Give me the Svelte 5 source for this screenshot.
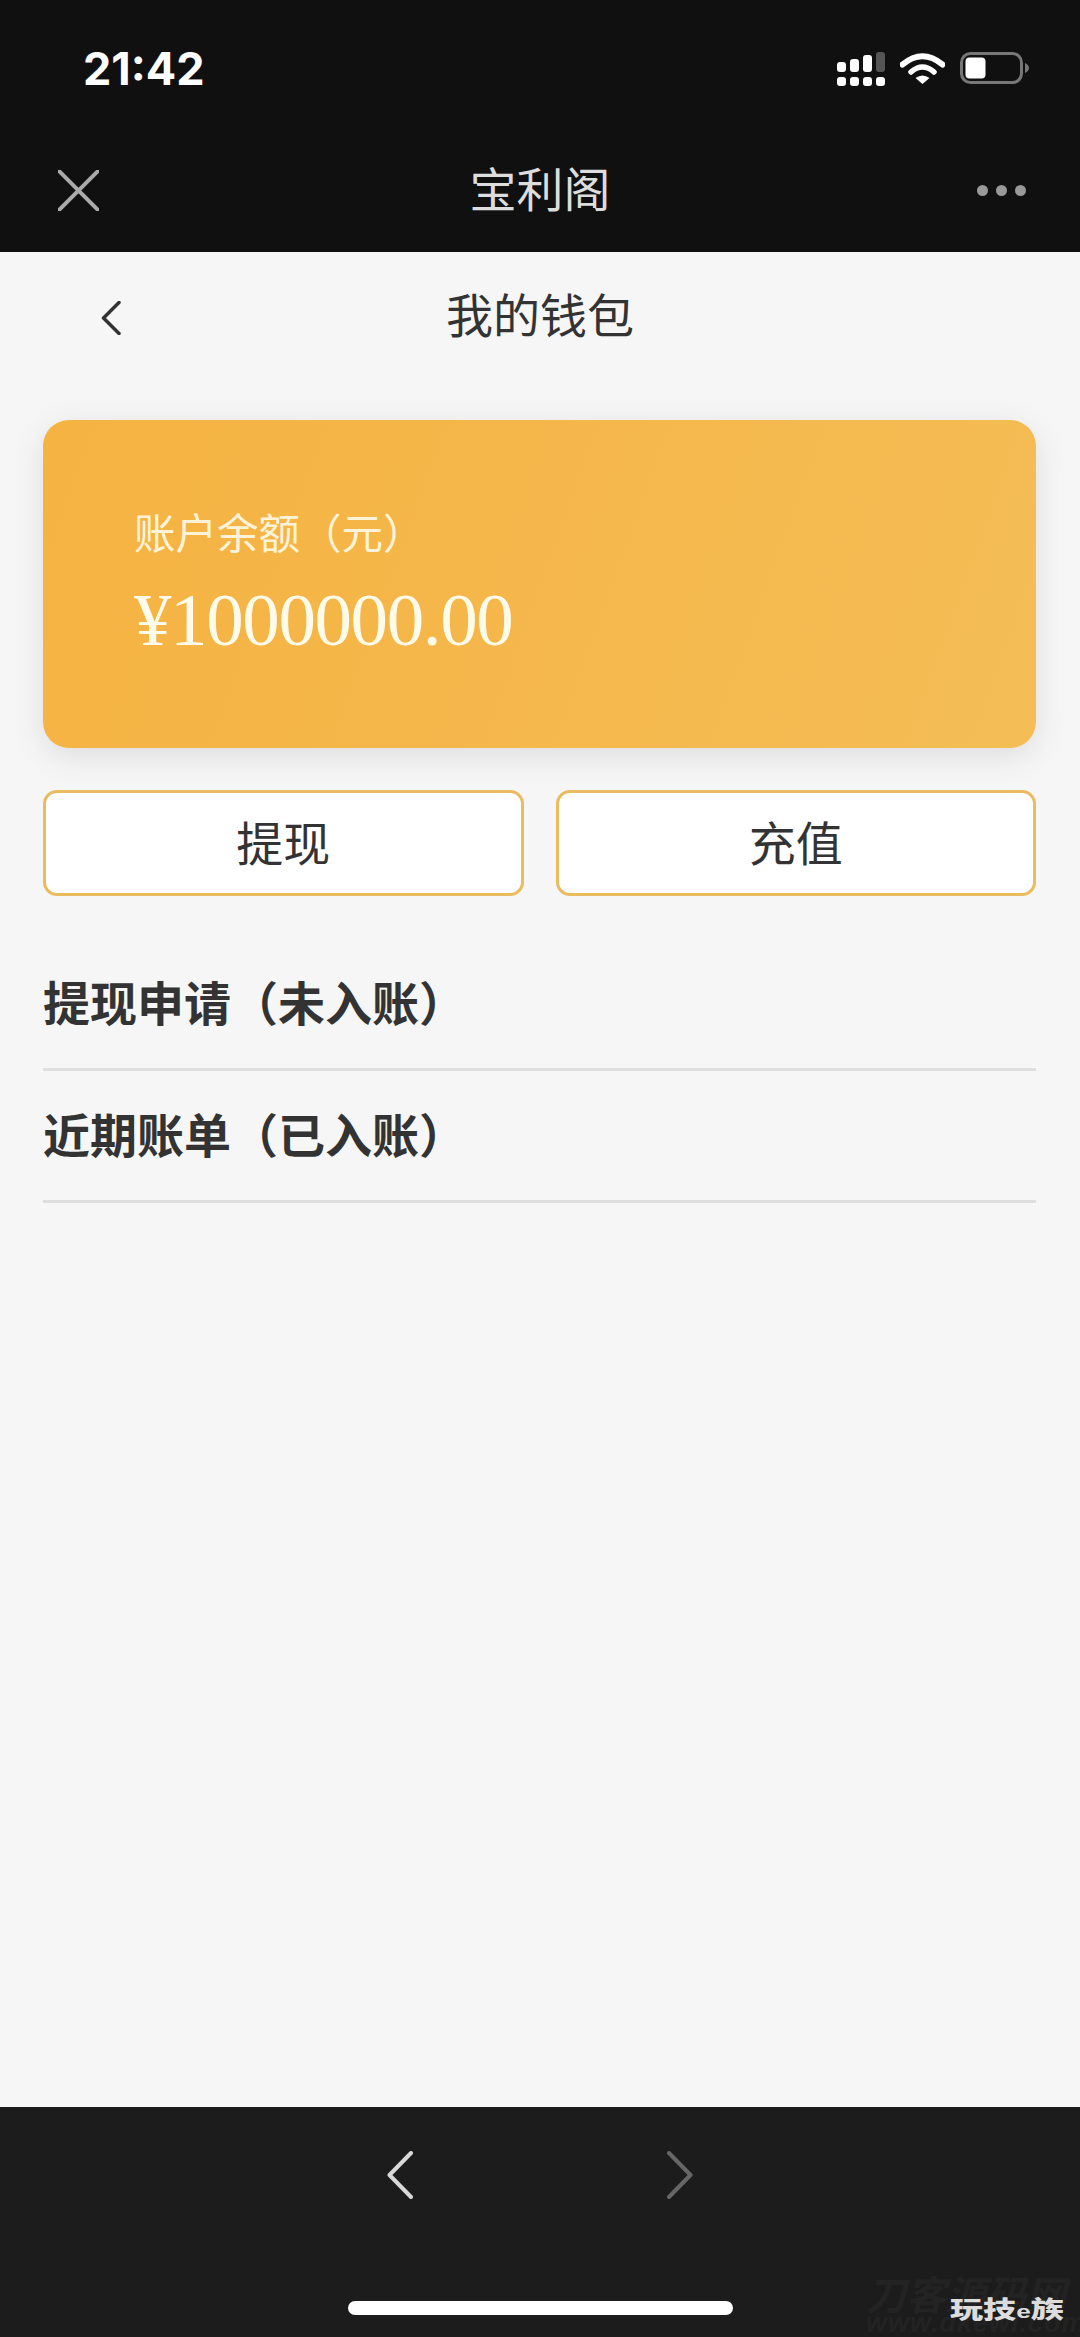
<script>
  const rows = ['提现申请（未入账）', '近期账单（已入账）'];
  const actions = ['提现', '充值'];
</script>

<div class="page">
  <header class="top">
    <div class="status">
      <span class="time">21:42</span>
      <div class="status-icons">
        <svg class="signal" width="48" height="34" viewBox="0 0 48 34">
          <rect x="0" y="10" width="9" height="10" rx="3" fill="#fff" />
          <rect x="13" y="7" width="9" height="13" rx="3" fill="#fff" />
          <rect x="26" y="3" width="9" height="17" rx="3" fill="#fff" />
          <rect x="39" y="0" width="9" height="20" rx="3" fill="#555" />
          <rect x="0" y="25" width="9" height="9" rx="3" fill="#fff" />
          <rect x="13" y="25" width="9" height="9" rx="3" fill="#fff" />
          <rect x="26" y="25" width="9" height="9" rx="3" fill="#fff" />
          <rect x="39" y="25" width="9" height="9" rx="3" fill="#fff" />
        </svg>
        <svg class="wifi" width="45" height="32" viewBox="0 0 45 32">
          <path d="M2.5 12.5 Q22.5 -4 42.5 12.5" fill="none" stroke="#fff" stroke-width="6" stroke-linecap="round" />
          <path d="M11 20 Q22.5 10 34 20" fill="none" stroke="#fff" stroke-width="5.5" stroke-linecap="round" />
          <path d="M15.5 26 Q22.5 21 29.5 26 L22.5 32 Z" fill="#fff" />
        </svg>
        <svg class="battery" width="70" height="32" viewBox="0 0 70 32">
          <rect x="1.5" y="1.5" width="60" height="29" rx="9" fill="none" stroke="#777" stroke-width="3" />
          <rect x="5.5" y="5.5" width="20" height="21" rx="4" fill="#fff" />
          <path d="M65 11 Q69 13 69 16 Q69 19 65 21 Z" fill="#777" />
        </svg>
      </div>
    </div>
    <nav class="nav">
      <svg class="close" width="41" height="41" viewBox="0 0 41 41">
        <path d="M1 1 L40 40 M40 1 L1 40" stroke="#aaa" stroke-width="4" stroke-linecap="round" />
      </svg>
      <h1 class="nav-title">宝利阁</h1>
      <div class="dots"><i></i><i></i><i></i></div>
    </nav>
  </header>

  <main class="main">
    <div class="subhead">
      <svg class="back" width="20" height="34" viewBox="0 0 20 34">
        <path d="M18 1.5 L2.5 17 L18 32.5" fill="none" stroke="#333" stroke-width="3.5" stroke-linecap="round" stroke-linejoin="round" />
      </svg>
      <h2 class="sub-title">我的钱包</h2>
    </div>

    <section class="card">
      <div class="card-label">账户余额（元）</div>
      <div class="amount">¥1000000.00</div>
    </section>

    <div class="actions">
      {#each actions as a}
        <button class="action">{a}</button>
      {/each}
    </div>

    <div class="list">
      {#each rows as r}
        <div class="row">{r}</div>
      {/each}
    </div>
  </main>

  <footer class="bottom">
    <div class="arrows">
      <svg width="26" height="48" viewBox="0 0 26 48">
        <path d="M24 2 L2.5 24 L24 46" fill="none" stroke="#d8d8d8" stroke-width="4" stroke-linecap="round" stroke-linejoin="round" />
      </svg>
      <svg width="26" height="48" viewBox="0 0 26 48">
        <path d="M2 2 L23.5 24 L2 46" fill="none" stroke="#666" stroke-width="4" stroke-linecap="round" stroke-linejoin="round" />
      </svg>
    </div>
    <div class="home"></div>
    <div class="mark-faint">刀客源码网<span>www.dkewl.com</span></div>
    <div class="mark">玩技<small>e</small>族</div>
  </footer>
</div>

<style>
  :global(body) {
    margin: 0;
    background: #f6f6f6;
  }
  .page {
    width: 1080px;
    height: 2337px;
    display: flex;
    flex-direction: column;
    overflow: hidden;
    font-family: "Noto Sans CJK SC", "Noto Sans", sans-serif;
  }
  .top {
    height: 252px;
    background: #101010;
    flex: none;
  }
  .status {
    height: 128px;
    box-sizing: border-box;
    padding: 52px 50px 0 83px;
    display: flex;
    justify-content: space-between;
    align-items: flex-start;
  }
  .time {
    font-family: Inter, "Liberation Sans", sans-serif;
    font-weight: 700;
    font-size: 45px;
    line-height: 34px;
    color: #fff;
  }
  .status-icons {
    display: flex;
    align-items: flex-start;
    gap: 15px;
  }
  .nav {
    height: 124px;
    padding: 0 53px 0 58px;
    display: flex;
    align-items: center;
    justify-content: space-between;
    position: relative;
  }
  .nav-title {
    margin: 0;
    padding-bottom: 6px;
    font-size: 47px;
    font-weight: 400;
    color: #ddd;
    line-height: 60px;
    position: absolute;
    left: 0;
    right: 0;
    text-align: center;
  }
  .dots {
    display: flex;
    gap: 8px;
    margin-right: 1px;
  }
  .dots i {
    width: 11px;
    height: 11px;
    border-radius: 50%;
    background: #999;
  }
  .main {
    flex: 1;
    background: #f6f6f6;
  }
  .subhead {
    height: 128px;
    padding-left: 101px;
    display: flex;
    align-items: center;
    position: relative;
  }
  .back {
    margin-top: 4px;
  }
  .sub-title {
    margin: 0;
    padding-bottom: 6px;
    font-size: 47px;
    font-weight: 400;
    color: #333;
    line-height: 60px;
    position: absolute;
    left: 0;
    right: 0;
    text-align: center;
  }
  .card {
    margin: 40px 44px 0 43px;
    height: 328px;
    box-sizing: border-box;
    padding: 86px 0 0 91px;
    border-radius: 26px;
    background: linear-gradient(110deg, #f5b342 0%, #f5b84c 55%, #f4bd56 100%);
    box-shadow: 0 8px 32px rgba(0, 0, 0, 0.1);
  }
  .card-label {
    font-size: 41.5px;
    line-height: 50px;
    color: #fdf3d8;
  }
  .amount {
    margin-top: 24px;
    font-family: "Liberation Serif", serif;
    font-size: 75px;
    letter-spacing: -1.4px;
    line-height: 80px;
    color: #fffbea;
  }
  .actions {
    margin: 42px 44px 0 43px;
    display: grid;
    grid-template-columns: 1fr 1fr;
    gap: 32px;
  }
  .action {
    height: 106px;
    box-sizing: border-box;
    padding: 0 0 6px;
    border: 3px solid #ebbb60;
    border-radius: 14px;
    background: #fff;
    font: inherit;
    font-size: 47px;
    color: #333;
  }
  .list {
    margin: 43px 44px 0 43px;
  }
  .row {
    height: 132px;
    box-sizing: border-box;
    border-bottom: 3px solid #dedede;
    font-size: 47px;
    font-weight: 700;
    color: #333;
    line-height: 123px;
  }
  .bottom {
    height: 230px;
    flex: none;
    background: #1c1c1c;
    position: relative;
    display: flex;
    flex-direction: column;
    align-items: center;
  }
  .arrows {
    margin-top: 44px;
    display: flex;
    gap: 254px;
  }
  .arrows svg {
    display: block;
  }
  .home {
    margin-top: 102px;
    width: 385px;
    height: 14px;
    border-radius: 7px;
    background: #fff;
  }
  .mark-faint {
    position: absolute;
    left: 866px;
    top: 167px;
    font-size: 40px;
    line-height: 38px;
    font-weight: 700;
    font-style: italic;
    color: #232323;
    white-space: nowrap;
  }
  .mark-faint span {
    font-family: "Liberation Sans", sans-serif;
    font-size: 27px;
    line-height: 22px;
    letter-spacing: 1px;
    display: block;
  }
  .mark {
    position: absolute;
    left: 950px;
    top: 189px;
    font-size: 24px;
    line-height: 24px;
    font-weight: 900;
    color: #dcdcdc;
    white-space: nowrap;
    transform: scaleX(1.38);
    transform-origin: left center;
  }
  .mark small {
    font-size: 19px;
    font-family: "Liberation Sans", sans-serif;
  }
</style>
